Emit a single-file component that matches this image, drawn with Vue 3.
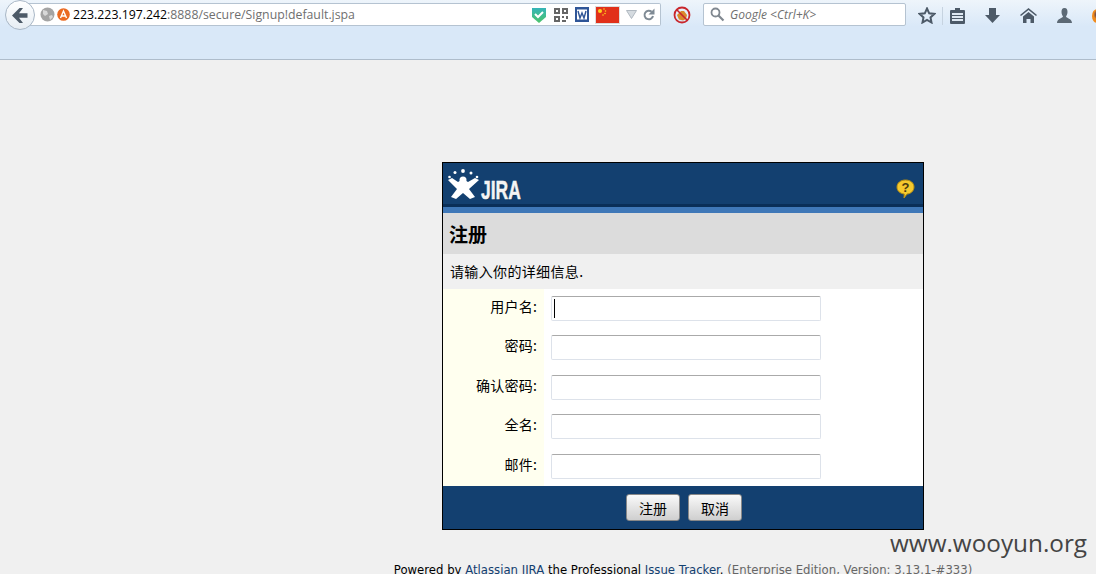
<script setup>
const fields = ["用户名", "密码", "确认密码", "全名", "邮件"];
</script>

<template>
  <div class="toolbar">
    <button class="back">
      <svg width="16" height="15" viewBox="0 0 16 15"><path d="M7.500 0 0 7.500 7.500 15H11L7 9.700h8.500V5.300H7L11 0z" fill="#4d5a68" /></svg>
    </button>
    <div class="urlbar">
      <svg class="ic" width="15" height="15" viewBox="0 0 15 15">
        <circle cx="7.500" cy="7.500" r="7" fill="#a4a4a4" />
        <path d="M3 3l4 1 1 3-3 2-2-2zM9 9l3-1 1 2-3 3z" fill="#d8d8d8" />
      </svg>
      <svg class="ic" width="13" height="13" viewBox="0 0 13 13">
        <circle cx="6.500" cy="6.500" r="6.300" fill="#ea6a22" />
        <path d="M3.500 10 6.500 3l3 7M4.800 8h3.400" fill="none" stroke="#fff" stroke-width="1.400" />
      </svg>
      <span class="url"><b>223.223.197.242</b>:8888/secure/Signup!default.jspa</span>
      <div class="url-icons">
        <svg class="shield" width="14" height="16" viewBox="0 0 14 16">
          <defs>
            <linearGradient id="shieldFill" x1="0" y1="0" x2="0" y2="1">
              <stop offset="0" stop-color="#35b4b8" />
              <stop offset="1" stop-color="#4cc46a" />
            </linearGradient>
          </defs>
          <path d="M0 1h14v9l-7 6-7-6z" fill="url(#shieldFill)" />
          <path d="M3 7l3 3 5-5" fill="none" stroke="#fff" stroke-width="2" />
        </svg>
        <svg class="qr" width="14" height="14" viewBox="0 0 14 14" fill="#666">
          <path d="M0 0h6v6H0zM2 2v2h2V2zM8 0h6v6H8zM10 2v2h2V2zM0 8h6v6H0zM2 10v2h2v-2zM8 8h2v2H8zM12 8h2v3h-2zM8 12h4v2H8z" fill-rule="evenodd" />
        </svg>
        <svg width="14" height="15" viewBox="0 0 14 15">
          <rect width="14" height="15" fill="#2f5597" />
          <rect x="2" y="2.500" width="10" height="10" fill="#fff" />
          <path d="M3 4l2 7 2-5 2 5 2-7" fill="none" stroke="#2f5597" stroke-width="1.400" />
        </svg>
        <svg width="25" height="18" viewBox="0 0 25 18">
          <rect x=".5" y=".5" width="24" height="17" fill="#e1301a" stroke="#ddd" />
          <circle cx="5" cy="5" r="2" fill="#ffd21c" />
          <circle cx="9" cy="3" r=".8" fill="#ffd21c" />
          <circle cx="10.500" cy="5" r=".8" fill="#ffd21c" />
          <circle cx="10" cy="7.500" r=".8" fill="#ffd21c" />
          <circle cx="8" cy="9" r=".8" fill="#ffd21c" />
        </svg>
        <svg width="11" height="9" viewBox="0 0 11 9"><path d="M.5.500h10L5.500 8.500z" fill="#d5dbe0" stroke="#b0b8c0" /></svg>
        <svg width="12" height="13" viewBox="0 0 12 13">
          <path d="M10 8a4.300 4.300 0 1 1-1.300-4.200" fill="none" stroke="#7f8a94" stroke-width="2" />
          <path d="M11.500 .5v6h-6z" fill="#7f8a94" />
        </svg>
      </div>
    </div>
    <svg class="blocked" width="18" height="18" viewBox="0 0 18 18">
      <path d="M4 9l2-2 2-2 3 0 3 4-1 4-3 1.500-4-1z" fill="#d98a2b" />
      <circle cx="9" cy="9" r="7.500" fill="none" stroke="#c9262c" stroke-width="1.800" />
      <path d="M4 4l10 10" stroke="#c9262c" stroke-width="1.600" />
    </svg>
    <div class="search">
      <svg width="15" height="15" viewBox="0 0 15 15">
        <circle cx="5.500" cy="5.500" r="4" fill="none" stroke="#808890" stroke-width="1.800" />
        <path d="M8.500 8.500l5 5" stroke="#808890" stroke-width="2.200" />
      </svg>
      <span>Google &lt;Ctrl+K&gt;</span>
    </div>
    <div class="tools">
      <svg width="18" height="17" viewBox="0 0 18 17">
        <path d="M9 1.500 11.200 6.300l5.100.6-3.800 3.500 1 5.100L9 13l-4.500 2.500 1-5.100L1.700 6.900l5.100-.6z" fill="none" stroke="#4d5a68" stroke-width="2" />
      </svg>
      <i class="sep"></i>
      <svg class="tool-list" width="15" height="16" viewBox="0 0 15 16">
        <path d="M5 0h5v2h4a1 1 0 0 1 1 1v12a1 1 0 0 1-1 1H1a1 1 0 0 1-1-1V3a1 1 0 0 1 1-1h4z" fill="#4d5a68" />
        <path d="M2 5h11v2H2zM2 8h11v2H2zM2 11h11v2H2z" fill="#dfe9f3" />
      </svg>
      <svg class="tool-gap" width="15" height="15" viewBox="0 0 15 15"><path d="M4 0h7v7h4l-7.500 8L0 7h4z" fill="#4d5a68" /></svg>
      <svg class="tool-gap" width="17" height="15" viewBox="0 0 17 15">
        <path d="M8.500 0 0 7l1 1 7.500-6L16 8l1-1zM3 8.500 8.500 4 14 8.500V15h-3.500v-4h-4v4H3z" fill="#4d5a68" />
      </svg>
      <svg class="tool-gap" width="15" height="15" viewBox="0 0 15 15">
        <path d="M7.500 0C10 0 10.500 2 10.500 4c0 2-1 3.500-1.500 4.500 0 1.500 6 2 6 6.500H0c0-4.500 6-5 6-6.500C5.500 7.500 4.500 6 4.500 4c0-2 .5-4 3-4z" fill="#5c6975" />
      </svg>
      <i class="fox"></i>
    </div>
  </div>

  <div class="page">
    <div class="dialog">
      <div class="head">
        <div class="logo">
          <svg width="32" height="31" viewBox="0 0 32 31">
            <g fill="#fff">
              <circle cx="1.500" cy="8" r="1.300" />
              <circle cx="7" cy="3.500" r="1.500" />
              <circle cx="15" cy="2" r="1.900" />
              <circle cx="23" cy="4" r="1.500" />
              <circle cx="29" cy="8" r="1.300" />
            </g>
            <path d="M0 11l4-2 6 4q5-4 10 0l7-4 4 2-10 9 6 8-5 2-7-6-7 6-5-2 6-8z" fill="#fff" />
            <circle cx="15" cy="11" r="3.500" fill="#fff" />
          </svg>
          <span>JIRA</span>
        </div>
        <svg class="help" width="19" height="20" viewBox="0 0 19 20">
          <path d="M9.500 1C14.500 1 18 4 18 8s-3.500 7-7 7l-3 4 .3-4C4 14.500 1 12 1 8s3.500-7 8.500-7z" fill="#f5c92e" stroke="#b98f10" />
          <text x="9.500" y="13" text-anchor="middle">?</text>
        </svg>
      </div>
      <h1 class="title">注册</h1>
      <p class="desc">请输入你的详细信息.</p>
      <div class="form">
        <div class="row" v-for="(field, i) in fields" :key="field">
          <label>{{ field }}:</label>
          <div class="cell">
            <input type="text" />
            <i v-if="i === 0" class="caret"></i>
          </div>
        </div>
      </div>
      <div class="foot">
        <button>注册</button>
        <button>取消</button>
      </div>
    </div>
    <p class="powered">
      Powered by <a>Atlassian JIRA</a> the Professional <a>Issue Tracker</a>.
      <span>(Enterprise Edition, Version: 3.13.1-#333)</span>
    </p>
  </div>
  <div class="mark">www.wooyun.org</div>
</template>

<style scoped>
.toolbar {
  display: flex;
  align-items: flex-start;
  height: 59px;
  border-bottom: 1px solid #aebccb;
  background: linear-gradient(#eef5fb, #d9e8f8 45%);
  overflow: hidden;
}
.back {
  position: relative;
  z-index: 1;
  flex: none;
  width: 30px;
  height: 30px;
  margin: 0 -10px 0 5px;
  padding: 0;
  border: 1px solid #a9b7c6;
  border-radius: 50%;
  background: linear-gradient(#fff, #e6edf4);
  display: flex;
  align-items: center;
  justify-content: center;
}
.urlbar {
  display: flex;
  flex: none;
  align-items: center;
  width: 636px;
  height: 23px;
  margin-top: 3px;
  padding-left: 15px;
  border: 1px solid #b5c3d1;
  border-left: none;
  border-radius: 0 2px 2px 0;
  background: #fff;
  box-sizing: border-box;
}
.ic {
  margin-right: 2px;
  flex: none;
}
.url {
  margin-left: 1px;
  font: 12.3px "Open Sans", sans-serif;
  color: #6f6f6f;
  white-space: nowrap;
}
.url b {
  font-weight: 400;
  color: #000;
}
.url-icons {
  display: flex;
  align-items: center;
  gap: 6px;
  margin-left: auto;
  padding-right: 5px;
}
.shield {
  margin-right: 2px;
}
.qr {
  margin-right: 1px;
}
.blocked {
  margin: 6px 0 0 12px;
  flex: none;
}
.search {
  display: flex;
  flex: none;
  align-items: center;
  gap: 5px;
  width: 203px;
  height: 23px;
  margin: 3px 0 0 12px;
  padding-left: 6px;
  border: 1px solid #b5c3d1;
  border-radius: 2px;
  background: #fff;
  box-sizing: border-box;
  font: italic 12px "Open Sans", sans-serif;
  color: #6f6f6f;
}
.tools {
  display: flex;
  flex: none;
  align-items: center;
  height: 17px;
  margin: 7px 0 0 12px;
}
.sep {
  width: 1px;
  height: 18px;
  margin: 0 7px 0 6px;
  background: #c6d3e0;
}
.tool-gap {
  margin-left: 20px;
}
.fox {
  width: 10px;
  height: 14px;
  margin-left: 20px;
  border-radius: 50%;
  background: radial-gradient(circle at 70% 40%, #2a2a6a 20%, #f08a1a 50%);
}
.page {
  padding: 102px 0 0 270px;
  font-family: "Liberation Sans", sans-serif;
}
.dialog {
  width: 482px;
  margin: 0 auto;
  border: 1px solid #000;
  box-sizing: border-box;
  background: #f0f0f0;
}
.head {
  display: flex;
  align-items: center;
  justify-content: space-between;
  height: 50px;
  padding: 0 8px 0 5px;
  border-bottom: 6px solid #3f78b8;
  background: linear-gradient(#134070 41px, #0a2f58 41px);
  box-sizing: border-box;
}
.logo {
  display: flex;
  align-items: flex-end;
  align-self: flex-start;
  height: 31px;
  margin-top: 6px;
}
.logo span {
  display: inline-block;
  width: 40px;
  margin: 0 0 -4px 1px;
  font: 700 25px/27px "Liberation Sans", sans-serif;
  color: #f4f4f4;
  -webkit-text-stroke: .5px #f4f4f4;
  text-shadow: 1px 1px 1px #0a2f58;
  transform: scaleX(.7);
  transform-origin: left;
}
.help {
  margin: 7px 0 0 0;
}
.help text {
  font: 700 13px "Liberation Sans", sans-serif;
  fill: #4a3a10;
}
.title {
  height: 41px;
  margin: 0;
  padding-left: 6px;
  background: #dcdcdc;
  font: 700 19px/42px "Noto Sans CJK SC", sans-serif;
  color: #000;
}
.desc {
  height: 35px;
  margin: 0;
  padding-left: 7px;
  font: 14px/35px "Noto Sans CJK SC", sans-serif;
  letter-spacing: .35px;
  color: #000;
}
.form {
  display: grid;
  grid-auto-rows: 39.5px;
  height: 197px;
  overflow: hidden;
  background: #fff;
}
.row {
  display: flex;
}
.row label {
  width: 101px;
  padding: 5.75px 7px 0 0;
  box-sizing: border-box;
  background: #ffffef;
  text-align: right;
  font: 14px/22px "Noto Sans CJK SC", sans-serif;
  letter-spacing: .2px;
  color: #000;
}
.cell {
  position: relative;
  margin-left: 7px;
  padding-top: 6.75px;
}
.cell input {
  display: block;
  width: 270px;
  height: 25px;
  padding: 0;
  border: 1px solid #dde2ea;
  border-top-color: #aaa;
  border-radius: 2px;
  box-sizing: border-box;
  outline: none;
  background: #fff;
}
.caret {
  position: absolute;
  left: 3px;
  top: 10px;
  width: 1px;
  height: 19px;
  background: #000;
}
.foot {
  display: flex;
  justify-content: center;
  gap: 8px;
  height: 43px;
  padding: 8px 0 0 2px;
  box-sizing: border-box;
  background: #134070;
}
.foot button {
  width: 54px;
  height: 27px;
  padding: 0;
  border: 1px solid #888;
  border-radius: 3px;
  background: linear-gradient(#fafafa, #e4e4e4 50%, #cfcfcf);
  font: 14px "Noto Sans CJK SC", sans-serif;
  color: #000;
}
.powered {
  margin: 32px 0 0;
  text-align: center;
  font: 11.7px/16px "DejaVu Sans", sans-serif;
  color: #000;
  white-space: nowrap;
}
.powered a {
  color: #134070;
}
.powered span {
  color: #666;
}
.mark {
  position: absolute;
  left: 890px;
  top: 526px;
  font: 24.3px/34px "Open Sans", sans-serif;
  color: #444;
}
</style>

<style>
html,
body {
  height: 574px;
  margin: 0;
  overflow: hidden;
  background: #f0f0f0;
}
</style>
